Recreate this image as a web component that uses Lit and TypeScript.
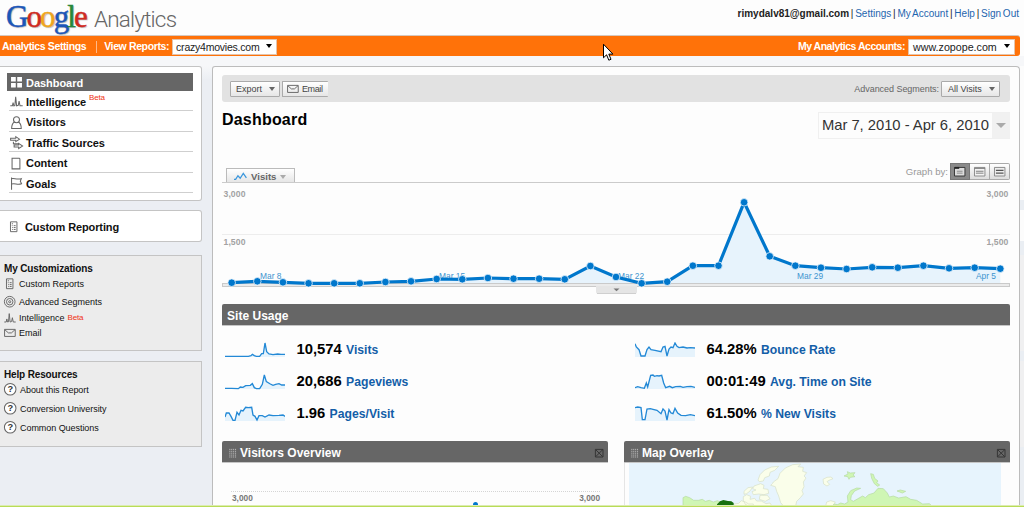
import { LitElement, html, css, svg } from 'lit'
import { customElement, property } from 'lit/decorators.js'

const ICONS: Record<string, unknown> = {
  dashboard: svg`<path fill="#fff" stroke="none" d="M1 1h4.6v4.4H1zM7 1h4.6v4.4H7zM1 6.8h4.6v4.4H1zM7 6.8h4.6v4.4H7z"/>`,
  intelligence: svg`<path d="M.3 10.5h2L3 7.3l.7 3.2 1-.2.8-8.6L6.4 10.5 8 10l.8-4 .9 4.5h2.6"/>`,
  visitors: svg`<circle cx="6.3" cy="3.6" r="2.9"/><path d="M4.4 5.8C2 7 1.6 9 1.6 12.2h9.3c0-3.2-.5-5.2-2.8-6.4"/>`,
  traffic: svg`<path d="M.6 2.1h5V.6l3.6 2.5-3.6 2.3V4.1h-5zM4 8.7h4.4V7.2L12.2 9.7l-3.8 2.5v-1.5H4zM3.3 5.5v2h5.3"/>`,
  content: svg`<path d="M2 1.2h7l.6.7v9.6H2z"/>`,
  goals: svg`<path d="M1.5.6v11.8M1.5 1.6C4 .6 6 3 11 1.6L10 4.1l1.2 2.4C7 8 5 5.6 1.5 6.8"/>`,
  report: svg`<path d="M2.6.9h6.8v10.3H2.6zM4 2.9h1.2M4 4.9h.8M6 4.9h2M4.4 6.9h.8M6 6.9h2M4.4 8.9h.8M6 8.9h2"/>`,
  target: svg`<circle cx="6" cy="6" r="5.6"/><circle cx="6" cy="6" r="3.4"/><circle cx="6" cy="6" r="1.1"/>`,
  mail: svg`<path d="M.6 2.5h11.2v7.4H.6zM.8 2.8 4.6 6.2h3.2l3.8-3.4"/>`,
  help: svg`<circle cx="6" cy="6" r="5.6" fill="#fff"/><text x="6" y="9.2" text-anchor="middle" font-size="9" font-weight="700" fill="#333" stroke="none">?</text>`,
  spark: svg`<path stroke="#3b97dc" stroke-width="1.2" d="M0 9h1.6l2.2-3.4L6 8l3-4.8 3 4.4"/>`,
  close: svg`<path stroke="#333" d="M2.5 2.5h8v8h-8zM3 3l7 7M10 3l-7 7"/>`,
  grip: svg`<path stroke="#ccc" stroke-dasharray="1 1" d="M3 2v9M5 2v9M7 2v9M9 2v9"/>`,
  day: svg`<path fill="#ddd" stroke="#333" d="M.5 1.5h11v9H.5z"/><path stroke="#222" stroke-width="2" d="M.5 2h5"/><path stroke="#888" d="M3 5.5h6M3 7.5h6"/>`,
  week: svg`<path fill="#f4f4f4" stroke="#888" d="M.5 1.5h11v9H.5z"/><path stroke="#777" d="M.5 2.5h11M2 5.5h8M2 7.5h8"/>`,
  month: svg`<path fill="#eee" stroke="#888" d="M.5 1.5h11v9H.5z"/><path stroke="#555" stroke-width="1.3" d="M2 4.5h8M2 7.5h8"/>`
}

const icon = (name: string, size = 12) => html`
  <svg class="icon" viewBox="0 0 12.6 12.6" width=${size} height=${size}>${ICONS[name]}</svg>`

const NAV = [
  ['dashboard', 'Dashboard'],
  ['intelligence', 'Intelligence'],
  ['visitors', 'Visitors'],
  ['traffic', 'Traffic Sources'],
  ['content', 'Content'],
  ['goals', 'Goals']
]

const CUSTOM = [
  ['report', 'Custom Reports'],
  ['target', 'Advanced Segments'],
  ['intelligence', 'Intelligence'],
  ['mail', 'Email']
]

const HELP = ['About this Report', 'Conversion University', 'Common Questions']

// sparkline points live in a 180 x 45 box
const METRICS = [
  ['10,574', 'Visits', '0,42 70,42 78,40 82,36 88,40 94,42 104,42 110,34 115,34 120,2 125,28 132,35 144,37 158,35 168,36 180,36'],
  ['64.28%', 'Bounce Rate', '0,4 4,14 12,22 18,41 30,41 36,22 42,14 48,22 60,24 78,28 84,14 90,12 96,41 102,20 108,14 114,16 120,2 126,12 132,16 144,14 156,17 166,16 180,17'],
  ['20,686', 'Pageviews', '0,42 20,42 40,43 46,38 54,39 62,34 76,33 82,28 88,40 94,43 104,43 112,30 118,2 124,22 136,29 144,33 152,30 162,28 170,32 180,32'],
  ['00:01:49', 'Avg. Time on Site', '0,40 8,37 18,40 28,42 34,26 38,38 47,3 54,2 58,6 66,4 72,5 80,3 86,26 92,40 104,36 112,40 122,37 136,36 144,39 156,37 168,36 180,39'],
  ['1.96', 'Pages/Visit', '0,32 4,20 12,20 18,30 24,42 30,42 36,18 42,26 48,12 54,14 62,3 70,4 80,3 84,26 90,30 96,41 102,28 112,28 120,32 132,26 144,28 162,27 174,26 180,30'],
  ['61.50%', '% New Visits', '0,4 8,2 18,4 22,40 30,40 36,8 46,7 54,9 66,12 78,22 84,8 90,14 96,41 102,10 108,20 114,22 120,6 128,20 138,27 152,28 166,25 180,28']
]

const VISITS = [
  282.7, 281.3, 282.3, 283.3, 283.3, 283.3, 282, 281.3, 279, 279.3, 278,
  278.7, 278.7, 279.3, 266, 277, 283.3, 281.7, 265.7, 265.7, 202.3, 256.3,
  265.7, 267.7, 269, 267.3, 267.7, 265.7, 268.3, 267.7, 268.7
]
const DAYS: [number, string][] = [[260, 'Mar 8'], [439, 'Mar 15'], [618, 'Mar 22'], [797, 'Mar 29'], [976, 'Apr 5']]

@customElement('ga-chart')
class GaChart extends LitElement {
  static styles = css`
    :host { display: block; height: 112px; }
    svg { display: block; font-family: 'Liberation Sans', Arial, sans-serif; }
    .axis { font-size: 8.6px; font-weight: 700; fill: #a2a2a2; letter-spacing: .1px; }
    .day { font-size: 8.4px; fill: #3d94cf; }
    .line { fill: none; stroke: #0077cc; stroke-width: 3.2; }
    circle { fill: #0077cc; stroke: #e6f3fc; stroke-width: .8; }
  `

  render () {
    const pts = VISITS.map((y, i) => [231.7 + i * 25.62, y])
    const line = pts.map(p => p.join(',')).join(' ')
    return html`
      <svg width="788" height="112" viewBox="222 182 788 112">
        <path stroke="#cbcbcb" d="M222 182.5h788"/>
        <path stroke="#ededed" d="M222 234.5h788"/>
        <polygon fill="#e7f3fc" points="231.7,283 ${line} 1000.3,283"/>
        <rect x="222" y="283" width="788" height="4" fill="#ebebeb"/>
        <path stroke="#cacaca" d="M222 283.5h788M222 286.5h788M222.5 283v4M1009.5 283v4"/>
        <text class="axis" x="223.5" y="197">3,000</text>
        <text class="axis" x="223.5" y="245">1,500</text>
        <text class="axis" x="1008.5" y="197" text-anchor="end">3,000</text>
        <text class="axis" x="1008.5" y="245" text-anchor="end">1,500</text>
        ${DAYS.map(([x, d]) => svg`<text class="day" x=${x} y="279">${d}</text>`)}
        <polyline class="line" points=${line} />
        ${pts.map(([x, y]) => svg`<circle cx=${x} cy=${y} r="3.8"/>`)}
        <path fill="#e5e5e5" d="M596 286h41v6q0 1.5-2 1.5h-37q-2 0-2-1.5z"/>
        <path stroke="#cfcfcf" d="M597 293.5h39"/>
        <path fill="#777" d="M613.5 288.5h6l-3 2.8z"/>
      </svg>`
  }
}

@customElement('ga-metric')
class GaMetric extends LitElement {
  @property() value = ''
  @property() label = ''
  @property() points = ''

  static styles = css`
    :host { display: flex; align-items: center; height: 32px; }
    svg { flex: none; margin-right: 11.5px; }
    polyline { fill: none; stroke: #2389d6; stroke-width: 4; }
    polygon { fill: #e6f3fc; }
    p { margin: 0; line-height: 20px; white-space: nowrap; }
    b { font-size: 14.8px; color: #000; }
    a { margin-left: 1.5px; font-size: 12.2px; font-weight: 700; color: #135ea8; }
  `

  render () {
    return html`
      <svg width="60" height="16" viewBox="0 -1 180 48">
        <polygon points="0,44 ${this.points} 180,44" />
        <polyline points=${this.points} />
      </svg>
      <p><b>${this.value}</b> <a>${this.label}</a></p>`
  }
}

@customElement('ga-map')
class GaMap extends LitElement {
  static styles = css`
    :host { display: block; height: 44px; padding: 0 9px 0 4px; }
    svg { display: block; background: #e7f4fd; }
    .ice { fill: #fafeea; stroke: #d6dfc5; stroke-width: 2; }
    .land { fill: #cff6b4; stroke: #b3d9a2; stroke-width: 2; }
  `

  render () {
    return html`
      <svg width="372" height="44" viewBox="87 487 1116 132">
        <path class="land" d="M249 620v-29l8-4 12 4 12 8h14l12-3 9 6 12-3 12 5 12-4 14 6v14z"/>
        <path class="ice" d="M402 610l14-2 8-8 12 4 10 6 14 0v12H402zM430 588l10-6 12 5-2 9 14-3 6 8 14 0 14 8 12-2 8 12h-66l-16-8-6-12z"/>
        <path class="ice" d="M432 572l12-11 14-2-8 12-10 8-8 2zM462 556l20-7 10 5-2 10 14 2 2 12-14 4-16-2-16 2-4-9 12-5-10-4zM474 538l6-16 14-14 20-9 22-2-12 12-14 6-2 11-14 5-4 10-12 2zM480 584h22l8 10-14 8-18-6z"/>
        <path class="ice" d="M520 544l14-10 6-16 16-16 22-10 24-2-8 8 16 2-2 12 12 4-8 10 6 6-8 12 2 14-6 12 4 10-8 10-12 12-4 18h-32l-12-14-6-20-6-14-4-14-14-4 6-6z"/>
        <path class="ice" d="M669 536l12-6 12-1 6 5-12 5-6 4 8 8-8 5-10-6zM680 604l12-4 14 4-6 9 8 7h-32z"/>
        <path class="land" d="M732 526l12-6-2-7 9 4 14-1-6 7 6 5-14 2-4 6-4-8zM812 519l8 2 4 12 10 8-4 5 9 7-6 4-10-8-8-16zM891 571l10-3 16 4-10 5z"/>
        <path class="land" d="M690 620l14-10 8 2 10-5 12 3 10-6-2-18 10-16 18-8 12 1-18 8-10 14-2 12 8 5 12-7 16-9 8 5 10-9 16-5 12-14 16 1 12 13 6 12 12-3 16 6 22-4 14 8 18 3 18 11 20-1 14 12z"/>
        <path fill="#18700f" d="M351 620v-9l9-9 10-4 14 3 10 1 7 5v13z"/>
      </svg>`
  }
}

@customElement('app-root')
class AppRoot extends LitElement {
  static styles = css`
    :host {
      display: block;
      position: relative;
      height: 507px;
      overflow: hidden;
      background: #fdfdfd;
      color: #222;
      font: 10px/14px 'Liberation Sans', Arial, sans-serif;
      white-space: nowrap;
    }
    * { box-sizing: border-box; }
    .icon { flex: none; display: block; fill: none; stroke: #666; stroke-width: 1; overflow: visible; }
    .arrow { width: 0; height: 0; border: 3px solid transparent; border-top: 4px solid #666; border-bottom: 0; }

    /* header */
    header { display: flex; justify-content: space-between; height: 35px; padding: 0 5px 0 6px; }
    .logo { display: flex; height: 35px; align-items: baseline; }
    .google { font: 31px/34px 'Liberation Serif', serif; letter-spacing: -1.9px; -webkit-text-stroke: .5px; text-shadow: 1px 1px 1px #bbb; }
    .blue { color: #1c56b8; }
    .red { color: #cf2b22; }
    .yellow { color: #efa51c; }
    .green { color: #27883b; }
    .product { margin-left: 8px; font: 300 22.5px/34px Roboto, sans-serif; letter-spacing: -.8px; color: #666; }
    .account { padding-top: 7px; font-size: 10px; word-spacing: -1px; }
    .account a { color: #1d65ae; }
    .bar {
      display: flex; align-items: center; width: 1020px; height: 21px; margin-right: 4px; padding: 1px 5px 0 2px;
      border-top: 1px solid #d5c8bf; border-radius: 0 3px 3px 0; background: #ff7209; color: #fff;
      font-size: 10.5px; font-weight: 700; letter-spacing: -.38px;
    }
    .bar span { position: relative; top: -.5px; }
    .bar i { width: 1px; height: 12px; margin: 0 7px 0 10px; background: #ffb98a; }
    .bar .accounts { margin-left: auto; letter-spacing: -.48px; }
    .select {
      display: flex; align-items: center; justify-content: space-between; width: 105px; height: 16px; margin-left: 3px; padding: 0 4px 0 3px;
      border: 1px solid #e4c4ac; background: #fff; color: #222; font-size: 10.5px; font-weight: 400; letter-spacing: -.22px;
    }
    .select.wide { width: 107px; padding-left: 4px; font-size: 10.7px; letter-spacing: 0; }
    .select .arrow { border-top-color: #000; }

    /* body */
    .page { display: flex; height: 451px; padding-top: 10px; background: linear-gradient(#f6f7f9, #f6f7f9 10px, #ebeef3 24px); }
    aside { width: 202px; margin-right: 10px; }
    .card { border: 1px solid #c4c4c4; border-left: 0; border-radius: 0 3px 3px 0; background: #fff; }
    .card.gray { background: #ececec; border-radius: 0; padding: 6px 0 0 4px; }
    .nav { display: grid; grid-template-rows: 18px 20px 21px 20px 21px 20px; height: 135px; padding: 6px 8px 0 7px; }
    .nav div, .reporting { display: flex; align-items: center; font-size: 11px; font-weight: 700; color: #111; }
    .nav div { margin-left: 2px; padding-top: 2px; border-bottom: 1px solid #cfcfcf; gap: 3px; letter-spacing: -.04px; }
    .nav div .icon { margin-left: 1px; }
    .nav .on { margin-left: 0; padding: 1px 0 0 2px; border: 0; background: #666; color: #fff; }
    .beta { color: #f03214; font-size: 8px; line-height: 10px; font-weight: 400; letter-spacing: -.2px; }
    .nav .beta { align-self: flex-start; }
    .reporting { height: 32px; margin: 9px 0 13px; padding: 1px 0 0 8px; gap: 5px; letter-spacing: -.12px; }
    .custom { height: 96px; margin-bottom: 10px; }
    .help { height: 86px; }
    h4 { margin: 0; font-size: 10px; line-height: 14px; color: #111; letter-spacing: -.15px; }
    .gray div { display: flex; align-items: center; gap: 3px; font-size: 9px; color: #111; }
    .gray .rows { display: grid; align-items: center; gap: 0; margin-top: -1px; }
    .custom .rows { grid-template-rows: 18px 18px 13px 18px; }
    .help .rows { grid-template-rows: 19px 19px 19px; margin-top: -2px; letter-spacing: -.05px; }

    main { width: 808px; padding: 8px 9px 0; border: 1px solid #bcbcbc; border-bottom: 0; border-radius: 3px 4px 0 0; background: #fdfdfd; }
    .tools { display: flex; align-items: center; height: 27px; padding: 0 10px 0 8px; border-radius: 3px; background: #e2e2e2; color: #666; font-size: 9px; }
    .button { display: flex; align-items: center; height: 16px; border: 1px solid #aaa; background: linear-gradient(#fff, #e6e6e6); color: #444; border-radius: 1px; }
    .export { width: 50px; padding: 0 4px 0 5px; justify-content: space-between; margin-right: 2px; }
    .email { width: 46px; padding-left: 4px; gap: 3px; letter-spacing: -.4px; border-right: 0; }
    .segments { margin-left: auto; margin-right: 2px; letter-spacing: -.05px; }
    .all { width: 59px; padding: 0 4px 0 6px; justify-content: space-between; }
    .title { display: flex; justify-content: space-between; height: 60px; }
    h1 { margin: 8px 0 0; font-size: 16px; line-height: 20px; color: #000; letter-spacing: .2px; }
    .date { display: flex; height: 27px; margin-top: 10px; border: 1px solid #f0f0f0; border-right: 0; font-size: 14.8px; line-height: 25px; letter-spacing: -.03px; color: #333; padding-left: 3px; }
    .date span { display: grid; place-items: center; width: 18px; margin-left: 3px; background: #f1f1f1; }
    .date .arrow { border-width: 5px 5px 0; border-top-color: #aaa; }
    .tabs { display: flex; align-items: flex-end; justify-content: space-between; height: 20px; padding-left: 4px; }
    .tab { display: flex; align-items: center; gap: 4px; width: 69px; height: 14px; padding: 2px 5px 0 7px; border: 1px solid #bbb; border-bottom: 0; background: linear-gradient(#fff, #e6e6e6); color: #666; font-size: 9.6px; font-weight: 700; }
    .tab .arrow { border-top-color: #aaa; }
    .graph { display: flex; align-items: center; height: 21px; font-size: 9.6px; color: #999; }
    .graph b { display: grid; place-items: center; width: 20px; height: 17px; border: 1px solid #aaa; border-left: 0; background: linear-gradient(#fff, #ddd); }
    .graph b:first-of-type { margin-left: 2px; border: 1px solid #777; background: #8a8a8a; }
    .graph b:last-child { border-radius: 0 2px 2px 0; }
    h2 { display: flex; align-items: center; gap: 1px; height: 22px; margin: 0; padding: 2px 3px 0 5px; border-bottom: 1px solid #c6c6c6; border-radius: 2px 2px 0 0; background: #666; color: #fff; font-size: 12px; letter-spacing: .02px; }
    h2 .icon:last-child { margin-left: auto; }
    .usage { margin-top: 10px; }
    .metrics { display: grid; grid-template-columns: 410px 1fr; align-content: start; padding: 8px 0 0 3px; height: 115px; }
    .widgets { display: grid; grid-template-columns: 386px 386px; gap: 16px; }
    .overview { display: flex; justify-content: space-between; margin: 28px 8px 0 9px; padding-left: 1px; border-top: 1px dotted #d5d5d5; font-size: 8.3px; line-height: 13px; font-weight: 700; color: #777; }
    .peak { width: 5px; height: 5px; margin: 10px -17px 0 101px; background: #0077cc; border-radius: 3px 3px 0 0; }
    .map { border-left: 1px solid #e5e5e5; }

    .edge { flex: none; width: 4px; height: 441px; background: linear-gradient(#fcfcfc 134px, #eaeef3 0 144px, #fcfcfc 0 175px, #eaeef3 0 189px, #f0f0f1 0 285px, #eaeef3 0 295px, #f0f0f1 0 381px, #eaeef3 0); }
    .cursor { position: absolute; left: 602px; top: 43px; }
    .strip { position: absolute; left: 0; right: 0; bottom: 0; height: 2px; background: linear-gradient(#dcebb0 50%, #b8dc57 50%); }
  `

  renderHeader () {
    return html`
      <header>
        <div class="logo">
          <span class="google"><span class="blue">G</span><span class="red">o</span><span class="yellow">o</span><span class="blue">g</span><span class="green">l</span><span class="red">e</span></span>
          <span class="product">Analytics</span>
        </div>
        <div class="account"><b>rimydalv81@gmail.com</b> | <a>Settings</a> | <a>My Account</a> | <a>Help</a> | <a>Sign Out</a></div>
      </header>
      <div class="bar">
        <span>Analytics Settings</span><i></i><span>View Reports:</span>
        <div class="select">crazy4movies.com<span class="arrow"></span></div>
        <span class="accounts">My Analytics Accounts:</span>
        <div class="select wide">www.zopope.com<span class="arrow"></span></div>
      </div>`
  }

  renderAside () {
    const beta = html`<span class="beta">Beta</span>`
    return html`
      <aside>
        <div class="card nav">
          ${NAV.map(([name, text], i) => html`
            <div class=${i ? '' : 'on'}>${icon(name, 13)}${text}${name === 'intelligence' ? beta : ''}</div>`)}
        </div>
        <div class="card reporting">${icon('report')}<span>Custom Reporting</span></div>
        <div class="card gray custom">
          <h4>My Customizations</h4>
          <div class="rows">
            ${CUSTOM.map(([name, text]) => html`<div>${icon(name)}${text}${name === 'intelligence' ? beta : ''}</div>`)}
          </div>
        </div>
        <div class="card gray help">
          <h4>Help Resources</h4>
          <div class="rows">${HELP.map(text => html`<div>${icon('help', 13)}${text}</div>`)}</div>
        </div>
      </aside>`
  }

  render () {
    return html`
      ${this.renderHeader()}
      <div class="page">
        ${this.renderAside()}
        <main>
          <div class="tools">
            <div class="button export">Export<span class="arrow"></span></div>
            <div class="button email">${icon('mail')}Email</div>
            <span class="segments">Advanced Segments:</span>
            <div class="button all">All Visits<span class="arrow"></span></div>
          </div>
          <div class="title">
            <h1>Dashboard</h1>
            <div class="date">Mar 7, 2010 - Apr 6, 2010<span><i class="arrow"></i></span></div>
          </div>
          <div class="tabs">
            <div class="tab">${icon('spark', 13)}Visits<span class="arrow"></span></div>
            <div class="graph">Graph by:<b>${icon('day')}</b><b>${icon('week')}</b><b>${icon('month')}</b></div>
          </div>
          <ga-chart></ga-chart>
          <h2 class="usage">Site Usage</h2>
          <div class="metrics">
            ${METRICS.map(([value, text, points]) => html`
              <ga-metric .value=${value} .label=${text} .points=${points}></ga-metric>`)}
          </div>
          <div class="widgets">
            <section>
              <h2>${icon('grip')}Visitors Overview${icon('close')}</h2>
              <div class="overview"><span>3,000</span><i class="peak"></i><span>3,000</span></div>
            </section>
            <section>
              <h2>${icon('grip')}Map Overlay${icon('close')}</h2>
              <div class="map"><ga-map></ga-map></div>
            </section>
          </div>
        </main>
        <div class="edge"></div>
      </div>
      <svg class="cursor" width="12" height="19" viewBox="0 0 12 19">
        <path fill="#fff" stroke="#000" d="M1.5 1.2v13.6l3.1-3 2.2 5.4 2.2-.9-2.2-5.2h4.1z"/>
      </svg>
      <div class="strip"></div>`
  }
}
